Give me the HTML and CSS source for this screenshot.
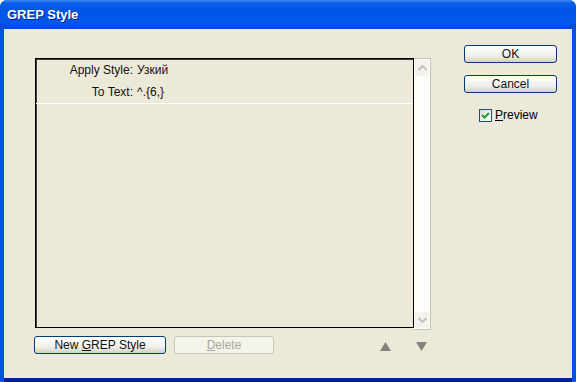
FILE: index.html
```html
<!DOCTYPE html>
<html lang="en">
<head>
    <meta charset="UTF-8">
    <title>GREP Style</title>
    <link rel="stylesheet" href="styles.css">
</head>
<body>

    <div class="window">
        <div class="titlebar">GREP Style</div>

        <div class="client">
            <div class="main">
                <div class="list">
                    <div class="list-box">
                        <div class="row"><span class="label">Apply Style:</span><span class="value">Узкий</span></div>
                        <div class="row"><span class="label">To Text:</span><span class="value">^.{6,}</span></div>
                        <div class="sep"></div>
                    </div>
                    <div class="scrollbar">
                        <div class="scroll-btn">
                            <svg width="9" height="6" viewBox="0 0 9 6"><path d="M0.5 5 L4.5 1 L8.5 5" fill="none" stroke="#c4c2b8" stroke-width="2"/></svg>
                        </div>
                        <div class="scroll-track"></div>
                        <div class="scroll-btn">
                            <svg width="9" height="6" viewBox="0 0 9 6"><path d="M0.5 1 L4.5 5 L8.5 1" fill="none" stroke="#c4c2b8" stroke-width="2"/></svg>
                        </div>
                    </div>
                </div>

                <div class="bottom-row">
                    <button class="btn btn-new">New <u>G</u>REP Style</button>
                    <button class="btn btn-delete" disabled><u>D</u>elete</button>
                    <div class="arrows">
                        <svg width="11" height="9" viewBox="0 0 11 9"><path d="M5.5 0 L11 9 L0 9 Z" fill="#84827a"/></svg>
                        <svg width="11" height="9" viewBox="0 0 11 9"><path d="M0 0 L11 0 L5.5 9 Z" fill="#84827a"/></svg>
                    </div>
                </div>
            </div>

            <div class="side">
                <button class="btn btn-side">OK</button>
                <button class="btn btn-side">Cancel</button>
                <label class="check">
                    <span class="box">
                        <svg width="11" height="11" viewBox="0 0 11 11"><path d="M2 5 L4.5 7.5 L9 3" fill="none" stroke="#21a121" stroke-width="2"/></svg>
                    </span>
                    <span><u>P</u>review</span>
                </label>
            </div>
        </div>
    </div>

</body>
</html>
```

FILE: styles.css
```css
html, body { margin: 0; padding: 0; }
body { width: 576px; height: 382px; overflow: hidden; font-family: "Liberation Sans", Arial, sans-serif; font-size: 12px; color: #000; }

.window { width: 576px; height: 382px; box-sizing: border-box; display: flex; flex-direction: column; background: #0054e3; border-radius: 7px 7px 0 0; overflow: hidden; }
.titlebar { height: 29px; flex: none; box-sizing: border-box; padding: 7px 0 0 7px; color: #fff; font-weight: bold; font-size: 13px; text-shadow: 1px 1px 0 #0a1e8c; background: linear-gradient(#3d8cf5 0, #0a5fe8 3px, #0055e5 10px, #0058ea 22px, #0048d8 29px); }

.client { flex: 1; display: flex; margin: 0 4px 4px 4px; background: #ece9d8; padding: 16px 0 0 31px; box-shadow: 0 4px 0 #001ea0; }

.main { width: 396px; display: flex; flex-direction: column; margin-top: 13px; }
.list { display: flex; height: 272px; }
.list-box { flex: 1; height: 270px; box-sizing: border-box; border: 1px solid #000; box-shadow: inset 1px 1px 0 #404040; }
.row { display: flex; height: 22px; align-items: center; color: #111; }
.label { width: 97px; text-align: right; padding-right: 4px; }
.sep { height: 1px; background: #fff; }

.scrollbar { width: 17px; display: flex; flex-direction: column; box-sizing: border-box; border: 1px solid #c4c2b4; border-left: none; background: #fdfdfa; }
.scroll-btn { height: 16px; margin: 1px; background: #f3f2ec; border-radius: 2px; display: flex; align-items: center; justify-content: center; }
.scroll-track { flex: 1; }

.bottom-row { display: flex; align-items: center; margin-top: 6px; margin-left: -1px; }
.btn { font-family: inherit; font-size: 12px; height: 18px; padding: 0; box-sizing: border-box; border: 1px solid #003c74; border-radius: 3px; background: linear-gradient(#fff, #f0f0ea 60%, #d6d0c5); color: #111; }
.btn-new { width: 132px; }
.btn-delete { width: 100px; margin-left: 8px; border-color: #c9c7ba; background: #f5f4ea; color: #aca899; }
.arrows { display: flex; gap: 25px; margin-left: 106px; padding-top: 3px; }

.side { display: flex; flex-direction: column; margin-left: 33px; }
.btn-side { width: 93px; margin-bottom: 12px; }
.check { display: flex; align-items: center; gap: 3px; margin: 3px 0 0 15px; }
.box { width: 13px; height: 13px; box-sizing: border-box; border: 1px solid #1c5180; background: linear-gradient(135deg, #dcdcd7, #fff); display: flex; align-items: center; justify-content: center; }
```
